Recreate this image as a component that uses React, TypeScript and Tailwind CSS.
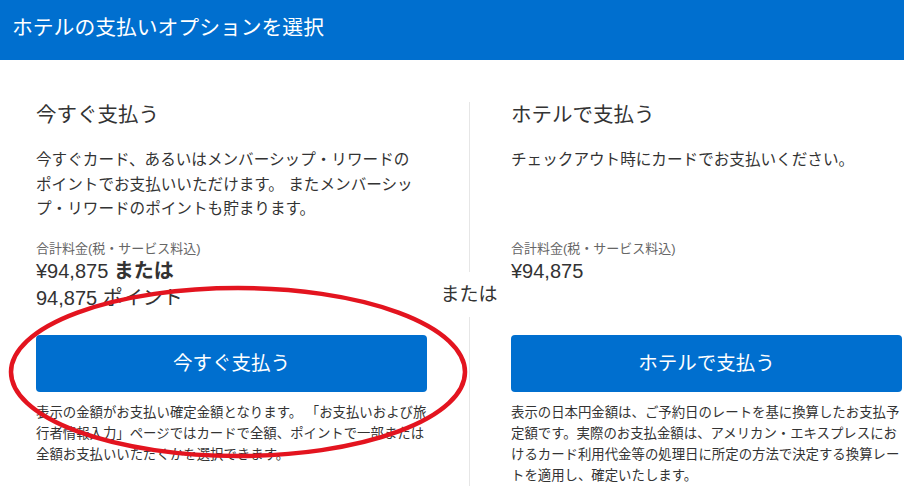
const font = { fontFamily: '"Liberation Sans", "Noto Sans CJK JP", sans-serif' }

function Column({
  title,
  desc,
  price,
  button,
  note
}: {
  title: string
  desc: React.ReactNode
  price: React.ReactNode
  button: string
  note: string
}) {
  return (
    <div className="flex w-[391px] flex-col">
      <h2 className="text-[20.5px] leading-[28px] text-[#333]">{title}</h2>
      <p className="mt-[19px] h-[92px] text-[15.6px] leading-[24.5px] text-[#333]">
        {desc}
      </p>
      <div className="text-[13px] leading-[18px] text-[#666]">
        合計料金(税・サービス料込)
      </div>
      <div className="h-[77px] text-[20px] leading-[27px] text-[#333]">
        {price}
      </div>
      <button className="h-[57px] w-full rounded-[4px] bg-[#006fcf] text-[19.5px] text-white">
        {button}
      </button>
      <p className="mt-[10px] text-[13.4px] leading-[21px] text-[#333]">
        {note}
      </p>
    </div>
  )
}

export default function App() {
  return (
    <div className="relative h-[498px] w-[904px] overflow-hidden bg-white" style={font}>
      <header className="flex h-[60px] items-center bg-[#006fcf] pl-[12px] pb-[4px]">
        <h1 className="text-[20.8px] text-white">ホテルの支払いオプションを選択</h1>
      </header>
      <main className="flex pt-[41px] pl-[36px]">
        <Column
          title="今すぐ支払う"
          desc={
            <>
              今すぐカード、あるいはメンバーシップ・リワードの
              <br />
              ポイントでお支払いいただけます。 またメンバーシッ
              <br />
              プ・リワードのポイントも貯まります。
            </>
          }
          price={
            <>
              ¥94,875 <b>または</b>
              <br />
              94,875 ポイント
            </>
          }
          button="今すぐ支払う"
          note="表示の金額がお支払い確定金額となります。 「お支払いおよび旅行者情報入力」ページではカードで全額、ポイントで一部または全額お支払いいただくかを選択できます。"
        />
        <div className="flex w-[84px] shrink-0 flex-col items-center pt-[1px]">
          <div className="w-px flex-1 bg-[#e6e6e6]" />
          <div className="py-[9px] text-[19px] leading-[27px] text-[#333]">または</div>
          <div className="w-px flex-1 bg-[#e6e6e6]" />
        </div>
        <Column
          title="ホテルで支払う"
          desc="チェックアウト時にカードでお支払いください。"
          price="¥94,875"
          button="ホテルで支払う"
          note="表示の日本円金額は、ご予約日のレートを基に換算したお支払予定額です。実際のお支払金額は、アメリカン・エキスプレスにおけるカード利用代金等の処理日に所定の方法で決定する換算レートを適用し、確定いたします。"
        />
      </main>
      <svg className="pointer-events-none absolute left-0 top-0" width="904" height="498">
        <ellipse cx="238" cy="372" rx="227" ry="84" fill="none" stroke="#e3141f" strokeWidth="4.5" />
      </svg>
    </div>
  )
}
